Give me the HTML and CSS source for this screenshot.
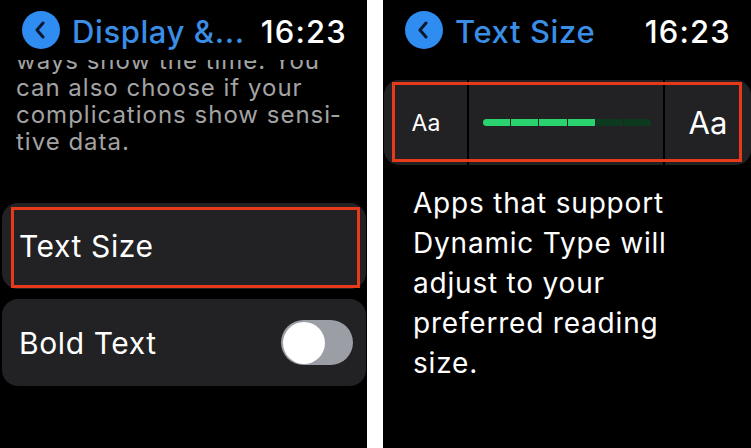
FILE: index.html
```html
<!DOCTYPE html>
<html lang="en">
<head>
    <meta charset="UTF-8">
    <meta name="viewport" content="width=device-width, initial-scale=1.0">
    <title>Watch Text Size</title>
    <link rel="stylesheet" href="styles.css">
</head>
<body>
    <div class="shots">
        <!-- Display & Brightness screen, scrolled down -->
        <div class="screen">
            <div class="nav">
                <div class="nav-left">
                    <span class="back">
                        <svg width="12" height="18" viewBox="0 0 12 18"><path d="M9 2 L3 9 L9 16" fill="none" stroke="#0b1830" stroke-width="3" stroke-linecap="round" stroke-linejoin="round"/></svg>
                    </span>
                    <span class="nav-title">Display &amp;...</span>
                </div>
                <span class="clock">16:23</span>
            </div>
            <div class="scroll">
                <p class="footnote">ways show the time. You can also choose if your complications show sensi&shy;tive data.</p>
                <div class="cell">
                    <span>Text Size</span>
                    <div class="mark mark-cell"></div>
                </div>
                <div class="cell">
                    <span>Bold Text</span>
                    <span class="toggle"><span class="knob"></span></span>
                </div>
            </div>
        </div>

        <!-- Text Size screen -->
        <div class="screen">
            <div class="nav">
                <div class="nav-left">
                    <span class="back">
                        <svg width="12" height="18" viewBox="0 0 12 18"><path d="M9 2 L3 9 L9 16" fill="none" stroke="#0b1830" stroke-width="3" stroke-linecap="round" stroke-linejoin="round"/></svg>
                    </span>
                    <span class="nav-title">Text Size</span>
                </div>
                <span class="clock">16:23</span>
            </div>
            <div class="stepper">
                <div class="step small">Aa</div>
                <div class="step level">
                    <span class="seg on"></span>
                    <span class="seg on"></span>
                    <span class="seg on"></span>
                    <span class="seg on"></span>
                    <span class="seg"></span>
                    <span class="seg"></span>
                </div>
                <div class="step large">Aa</div>
                <div class="mark mark-stepper"></div>
            </div>
            <p class="info">Apps that support Dynamic Type will adjust to your preferred reading size.</p>
        </div>
    </div>
</body>
</html>
```

FILE: styles.css
```css
body {
    margin: 0;
    background: #fff;
    font-family: Inter, "Noto Sans", sans-serif;
}
.shots {
    display: flex;
    gap: 16px;
    height: 448px;
}
.screen {
    width: 367px;
    height: 448px;
    background: #000;
    color: #fff;
    overflow: hidden;
    display: flex;
    flex-direction: column;
}
.screen + .screen {
    width: 368px;
}

/* top bar */
.nav {
    height: 60px;
    flex-shrink: 0;
    display: flex;
    align-items: center;
    justify-content: space-between;
    padding: 0 20px 0 22px;
    background: #000;
    position: relative;
    z-index: 1;
}
.nav-left {
    display: flex;
    align-items: center;
    gap: 12px;
}
.back {
    width: 38px;
    height: 38px;
    border-radius: 50%;
    background: #2f8cf0;
    display: flex;
    align-items: center;
    justify-content: center;
}
.back svg {
    margin-left: -2px;
}
.nav-title {
    color: #3a8ee6;
    font-size: 31px;
    font-weight: 500;
    letter-spacing: 0.6px;
    margin-top: 2px;
}
.clock {
    font-size: 31px;
    font-weight: 500;
    letter-spacing: 1.2px;
    margin-top: 2px;
}

/* left screen */
.scroll {
    flex: 1;
}
.footnote {
    margin: -13px 0 0;
    padding: 0 14px 0 16px;
    color: #a3a3a3;
    font-size: 24px;
    line-height: 27px;
    letter-spacing: 1px;
}
.cell {
    position: relative;
    height: 86px;
    margin: 48px 1px 0 2px;
    padding: 0 13px 0 17px;
    background: #222224;
    border-radius: 16px;
    display: flex;
    align-items: center;
    justify-content: space-between;
    font-size: 30px;
    letter-spacing: 0.6px;
}
.cell + .cell {
    margin-top: 10px;
    height: 87px;
}
.toggle {
    width: 72px;
    height: 45px;
    border-radius: 23px;
    background: #9c9ea6;
    display: flex;
    align-items: center;
    padding: 0 2px;
    box-sizing: border-box;
}
.knob {
    width: 42px;
    height: 42px;
    border-radius: 50%;
    background: #fff;
}

/* red highlight around the tapped control */
.mark {
    position: absolute;
    border: 3px solid #e63a1a;
}
.mark-cell {
    left: 9px;
    top: 4px;
    right: 6px;
    bottom: 1px;
}
.mark-stepper {
    left: 8px;
    top: 2px;
    right: 9px;
    bottom: 3px;
}

/* right screen */
.stepper {
    position: relative;
    height: 85px;
    margin: 20px 0 0 1px;
    background: #222224;
    border-radius: 15px;
    display: grid;
    grid-template-columns: 83px 1fr 86px;
}
.step {
    display: flex;
    align-items: center;
    justify-content: center;
}
.small {
    font-size: 23px;
    padding-left: 1px;
}
.large {
    font-size: 31px;
}
.level {
    border-left: 2px solid #000;
    border-right: 2px solid #000;
    padding: 0 12px 0 14px;
    gap: 1px;
}
.seg {
    flex: 1;
    height: 7px;
    background: #0c3a1f;
}
.seg.on {
    background: #2bd36e;
}
.seg:first-child {
    border-radius: 4px 0 0 4px;
}
.seg:last-child {
    border-radius: 0 4px 4px 0;
}
.info {
    margin: 18px 0 0;
    padding: 0 20px 0 30px;
    font-size: 28px;
    line-height: 40px;
    letter-spacing: 0.8px;
}
```
